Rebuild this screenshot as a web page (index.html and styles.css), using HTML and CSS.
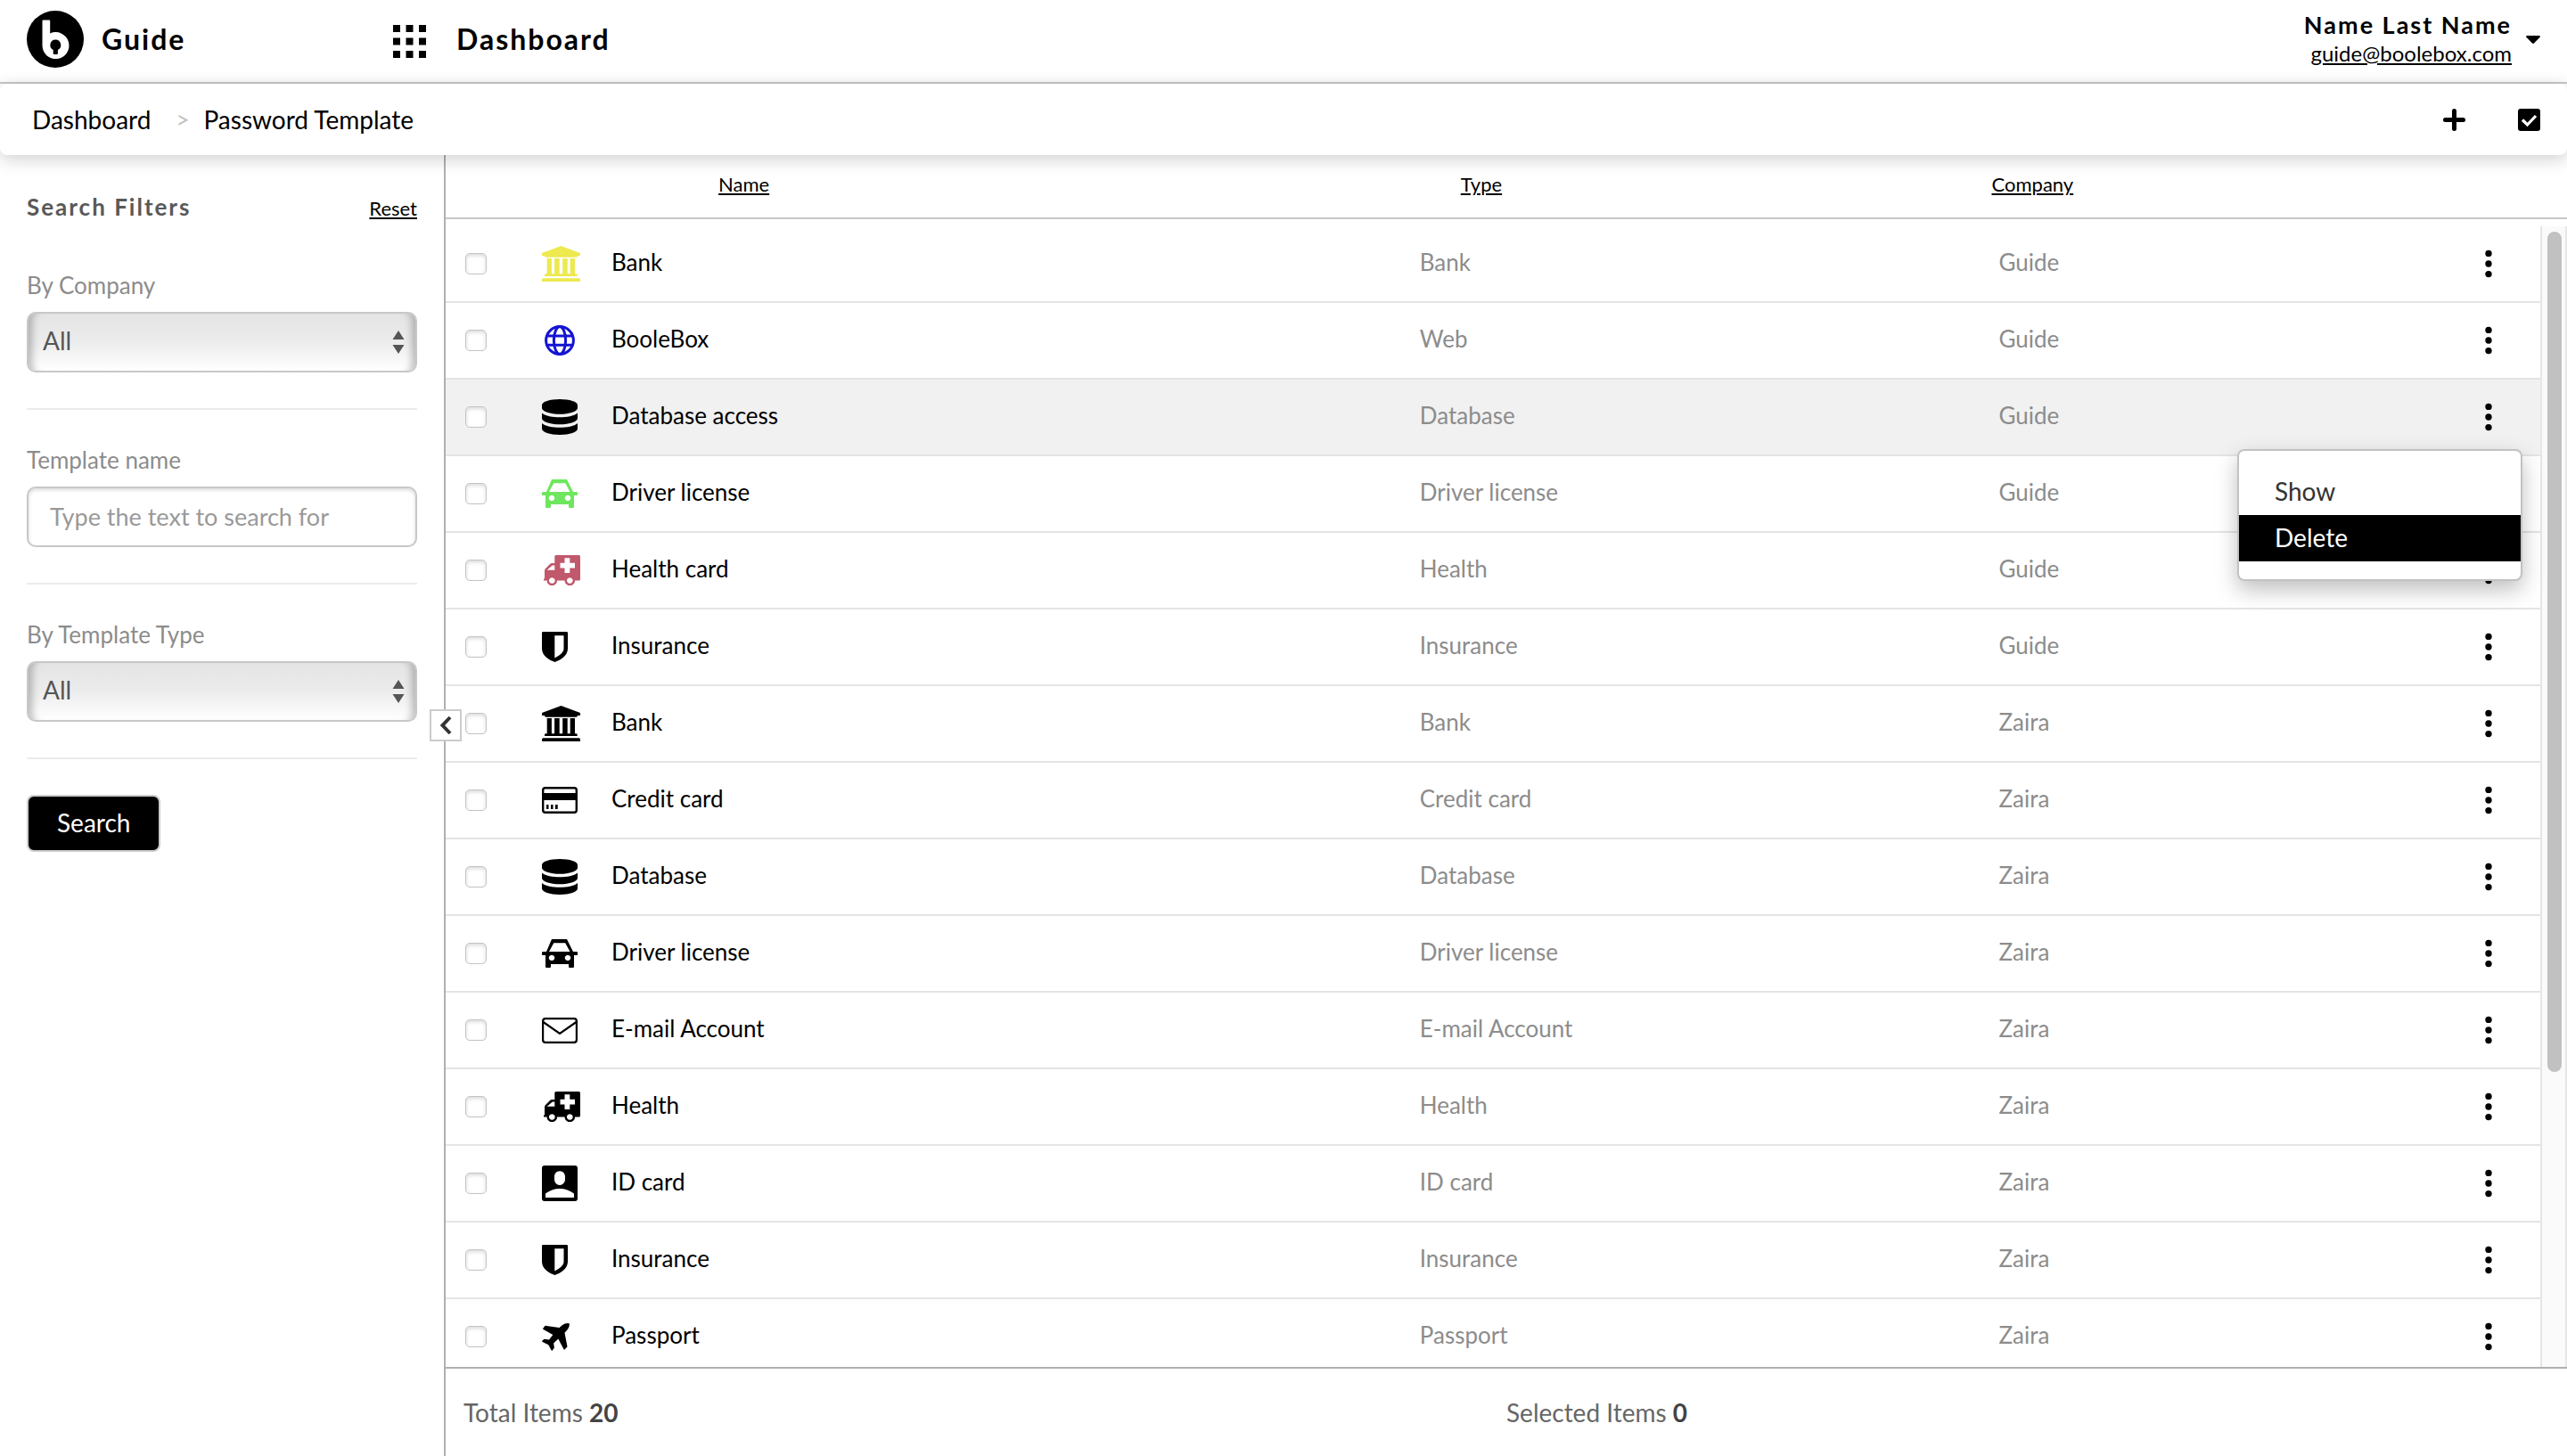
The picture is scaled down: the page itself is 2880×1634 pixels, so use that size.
FILE: index.html
```html
<!DOCTYPE html>
<html lang="en">
<head>
  <meta charset="UTF-8" />
  <meta name="viewport" content="width=device-width, initial-scale=1.0">
  <title>Password Template</title>
  <link rel="stylesheet" href="styles.css">
</head>
<body>
<svg class="sprite" aria-hidden="true">
  <symbol id="bank" viewBox="0 0 43 40">
    <path d="M21.500 0 43 8v3h-3q0 1.700-1.700 1.700H4.700Q3 12.700 3 11H0V8z"/>
    <path d="M5.700 14h5.200v17.300h3.200V14h5.600v17.300h3.500V14h5.500v17.300h3V14H37v17.300h1.300q1.400 0 1.400 1.400V34H3v-1.300q0-1.400 1.400-1.400h1.300zM1.500 36.300h40q1.500 0 1.500 1.500V40H0v-2.200q0-1.500 1.500-1.500z"/>
  </symbol>
  <symbol id="globe" viewBox="0 0 34 34">
    <g fill="none" stroke="currentColor" stroke-width="3">
      <circle cx="17" cy="17" r="15.400"/>
      <ellipse cx="17" cy="17" rx="6.600" ry="15.400"/>
      <path d="M2.500 12h29M2.500 22.200h29"/>
    </g>
  </symbol>
  <symbol id="database" viewBox="0 0 40 40">
    <path d="M0 6.500C0 2.900 9 0 20 0s20 2.900 20 6.500V10c0 3.700-9 6.800-20 6.800S0 13.700 0 10z"/>
    <path d="M0 15.500c4 3.400 12 4.800 20 4.800s16-1.400 20-4.800v6c0 3.700-9 6.800-20 6.800s-20-3.100-20-6.800z"/>
    <path d="M0 27c4 3.400 12 4.800 20 4.800s16-1.400 20-4.800v6.300C40 37 31 40 20 40S0 37 0 33.300z"/>
  </symbol>
  <symbol id="car" viewBox="0 0 40 32">
    <path fill-rule="evenodd" d="M11 0h17l7 14h3.500a1.700 1.700 0 0 1 0 4H36v12a3 3 0 0 1-6 0v-2H10v2a3 3 0 0 1-6 0V18H1.500a1.700 1.700 0 0 1 0-4H5zM13.300 4.200 8 14h23.500l-5.300-9.800zM11 17.700a3.200 3.200 0 1 0 .01 0zM29 17.700a3.200 3.200 0 1 0 .01 0z"/>
  </symbol>
  <symbol id="ambulance" viewBox="0 0 41 34">
    <path fill-rule="evenodd" d="M12.300 1.500Q12.300 0 13.800 0h25.700Q41 0 41 1.500V27q0 1.500-1.500 1.500h-4.400a5.800 5.800 0 0 1-11.600 0h-8.400a5.800 5.800 0 0 1-11.600 0H0v-2h1V17.500Q1 16 2 15l5-5q1-1 2.500-1h2.800zM12.300 11.600H9.800L3.700 16.700h8.600zM23.500 3.300v5.400h-5v5.800h5V20h5.800v-5.500H35V8.700h-5.700V3.300zM9.300 25.200a3.300 3.300 0 1 0 .01 0zM29.300 25.200a3.300 3.300 0 1 0 .01 0z"/>
  </symbol>
  <symbol id="shield" viewBox="0 0 29 34">
    <path fill-rule="evenodd" d="M1.200 0h26.600Q29 0 29 1.200V19c0 8-8.500 13-14.500 15C8.500 32 0 27 0 19V1.200Q0 0 1.200 0zM14.300 4.300V29.500c5.500-3 10.200-6.500 10.200-10.500V4.300z"/>
  </symbol>
  <symbol id="card" viewBox="0 0 40 30">
    <rect x="1.200" y="1.200" width="37.600" height="27.600" rx="2.500" fill="none" stroke="currentColor" stroke-width="2.400"/>
    <path d="M1 7h38v8H1zM5 20h2.500v5H5zM10 20h2.500v5H10zM15 20h2.700v5H15z"/>
  </symbol>
  <symbol id="mail" viewBox="0 0 40 29">
    <g fill="none" stroke="currentColor" stroke-width="2.200">
      <rect x="1.100" y="1.100" width="37.800" height="26.800" rx="2.800"/>
      <path d="M1.500 5 20 17.800 38.500 5"/>
    </g>
  </symbol>
  <symbol id="idcard" viewBox="0 0 40 40">
    <path fill-rule="evenodd" d="M3 0h34q3 0 3 3v34q0 3-3 3H3q-3 0-3-3V3q0-3 3-3zM4 36h32v-4.500C31.500 28 26 26 20 26S8.500 28 4 31.500zM20 6.200c-3.500 0-6 2.800-6 6.300v3c0 3.500 2.500 6.500 6 6.500s6-3 6-6.500v-3c0-3.500-2.500-6.300-6-6.300z"/>
  </symbol>
  <symbol id="plane" viewBox="0 0 31 31">
    <path d="M30.700.3q.7 3.500-1.700 6.400l-3.500 4 3 15.500-3 3.300q-.6.400-1-.2L18.300 17.500l-5.200 5 .8 5-2.300 3.300q-.6.200-.9-.2L7.300 24.200.3 20.800q-.4-.6 0-1l2.200-2 5.500.6 4.300-5.400L1.300 6.800q-.5-.5 0-1L3.600 2.800 19.500 5l3.500-3Q26.500-.5 30.700.3z"/>
  </symbol>
  <symbol id="dots" viewBox="0 0 8 32">
    <circle cx="4" cy="4.400" r="3.700"/><circle cx="4" cy="16" r="3.700"/><circle cx="4" cy="27.600" r="3.700"/>
  </symbol>
  <symbol id="sort" viewBox="0 0 14 26">
    <path d="M7 0l6.500 10H.500zM7 26L.500 16h13z"/>
  </symbol>
</svg>

<header class="topbar">
  <a class="brand" href="#">
    <svg class="logo" viewBox="0 0 64 64" aria-hidden="true">
      <circle cx="32" cy="32" r="32"/>
      <path fill="#fff" d="M17.500 11.500q0-1 1-1h6.700q1 0 1 1v14A15 15 0 1 1 17.500 39z"/>
      <path d="M32.300 32.500a6 6 0 0 1 2.600 11.400V48q0 1-1 1h-3.200q-1 0-1-1v-4.100a6 6 0 0 1 2.600-11.400z"/>
    </svg>
    <span>Guide</span>
  </a>
  <button class="apps-btn" aria-label="Applications">
    <svg width="37" height="37" viewBox="0 0 37 37"><path d="M0 0h8v8H0zM14.500 0h8v8h-8zM29 0h8v8h-8zM0 14.500h8v8H0zM14.500 14.500h8v8h-8zM29 14.500h8v8h-8zM0 29h8v8H0zM14.500 29h8v8h-8zM29 29h8v8h-8z"/></svg>
  </button>
  <h1>Dashboard</h1>
  <div class="user">
    <div class="user-info">
      <div class="user-name">Name Last Name</div>
      <a class="user-mail" href="#">guide@boolebox.com</a>
    </div>
    <button aria-label="Account menu">
      <svg width="16" height="9" viewBox="0 0 16 9"><path d="M1 0h14q1.500.5.600 1.700L9 8.500q-1 .9-2 0L.400 1.700Q-.500.500 1 0z"/></svg>
    </button>
  </div>
</header>

<nav class="toolbar">
  <a href="#">Dashboard</a>
  <span class="sep">&gt;</span>
  <a href="#">Password Template</a>
  <div class="tools">
    <button aria-label="Add">
      <svg width="25" height="25" viewBox="0 0 25 25"><path d="M12.500 2.500v20M2.500 12.500h20" fill="none" stroke="#000" stroke-width="5" stroke-linecap="round"/></svg>
    </button>
    <button aria-label="Select all">
      <svg width="25" height="25" viewBox="0 0 25 25"><rect width="25" height="25" rx="3"/><path d="M5 12.500l5.500 5.500L20 8" fill="none" stroke="#fff" stroke-width="3.200"/></svg>
    </button>
  </div>
</nav>

<div class="workspace">
  <aside class="sidebar">
    <div class="filters-head">
      <h2>Search Filters</h2>
      <a href="#">Reset</a>
    </div>
    <div class="filter">
      <label for="company">By Company</label>
      <div class="select-box">
        <select id="company"><option>All</option></select>
        <svg width="14" height="26"><use href="#sort"/></svg>
      </div>
    </div>
    <div class="filter">
      <label for="template">Template name</label>
      <input type="text" id="template" placeholder="Type the text to search for">
    </div>
    <div class="filter">
      <label for="type">By Template Type</label>
      <div class="select-box">
        <select id="type"><option>All</option></select>
        <svg width="14" height="26"><use href="#sort"/></svg>
      </div>
    </div>
    <button class="search-btn">Search</button>
    <button class="collapse-btn" aria-label="Collapse filters">
      <svg width="14" height="22" viewBox="0 0 14 22"><path d="M12 2L3.500 11l8.500 9" fill="none" stroke="#333" stroke-width="4"/></svg>
    </button>
  </aside>

  <main>
    <div class="list">
      <table>
        <colgroup>
          <col class="col-check"><col class="col-icon"><col class="col-name"><col class="col-type"><col><col class="col-menu">
        </colgroup>
        <thead>
          <tr>
            <th></th>
            <th></th>
            <th class="th-name"><a href="#">Name</a></th>
            <th class="th-type"><a href="#">Type</a></th>
            <th><a href="#">Company</a></th>
            <th></th>
          </tr>
        </thead>
        <tbody id="rows"></tbody>
      </table>
      <div class="scrollbar"><div class="thumb"></div></div>
    </div>
    <footer>
      <div>Total Items <b>20</b></div>
      <div>Selected Items <b>0</b></div>
    </footer>
  </main>
</div>

<script>
const items = [
  { name: "Bank", type: "Bank", company: "Guide", icon: "bank", color: "yellow" },
  { name: "BooleBox", type: "Web", company: "Guide", icon: "globe", color: "blue" },
  { name: "Database access", type: "Database", company: "Guide", icon: "database", open: true },
  { name: "Driver license", type: "Driver license", company: "Guide", icon: "car", color: "green" },
  { name: "Health card", type: "Health", company: "Guide", icon: "ambulance", color: "red" },
  { name: "Insurance", type: "Insurance", company: "Guide", icon: "shield" },
  { name: "Bank", type: "Bank", company: "Zaira", icon: "bank" },
  { name: "Credit card", type: "Credit card", company: "Zaira", icon: "card" },
  { name: "Database", type: "Database", company: "Zaira", icon: "database" },
  { name: "Driver license", type: "Driver license", company: "Zaira", icon: "car" },
  { name: "E-mail Account", type: "E-mail Account", company: "Zaira", icon: "mail" },
  { name: "Health", type: "Health", company: "Zaira", icon: "ambulance" },
  { name: "ID card", type: "ID card", company: "Zaira", icon: "idcard" },
  { name: "Insurance", type: "Insurance", company: "Zaira", icon: "shield" },
  { name: "Passport", type: "Passport", company: "Zaira", icon: "plane" }
];
const menu = `
  <div class="menu">
    <button>Show</button>
    <button class="active">Delete</button>
  </div>`;

document.getElementById("rows").innerHTML = items.map(item => `
  <tr class="${item.open ? "selected" : ""}">
    <td class="check"><input type="checkbox" aria-label="Select ${item.name}"></td>
    <td class="icon"><svg class="icon-${item.icon} ${item.color || ""}"><use href="#${item.icon}"/></svg></td>
    <td class="name">${item.name}</td>
    <td class="text">${item.type}</td>
    <td class="text">${item.company}</td>
    <td class="actions">
      <button class="dots-btn" aria-label="Actions"><svg width="8" height="32"><use href="#dots"/></svg></button>
      ${item.open ? menu : ""}
    </td>
  </tr>`).join("");
</script>
</body>
</html>
```
FILE: styles.css
```css
* {
  box-sizing: border-box;
}
body {
  margin: 0;
  height: 100vh;
  display: flex;
  flex-direction: column;
  overflow: hidden;
  font-family: Lato, sans-serif;
  font-size: 26px;
  line-height: 32px;
  color: #000;
  background: #fff;
}
a {
  color: #000;
}
button {
  font: inherit;
  padding: 0;
  border: none;
  background: none;
  cursor: pointer;
}
button svg {
  display: block;
}
h1, h2 {
  margin: 0;
}
.sprite {
  display: none;
}

/* top bar */
.topbar {
  display: flex;
  align-items: center;
  height: 94px;
  padding: 0 30px 4px;
  border-bottom: 2px solid #c8c8c8;
}
.brand {
  display: flex;
  align-items: center;
  gap: 20px;
  width: 411px;
  font-size: 32px;
  font-weight: bold;
  letter-spacing: 2px;
  text-decoration: none;
}
.logo {
  width: 64px;
  height: 64px;
}
.apps-btn {
  margin: 4px 34px 0 0;
}
h1 {
  font-size: 32px;
  letter-spacing: 2px;
}
.user {
  display: flex;
  align-items: center;
  gap: 16px;
  margin-left: auto;
  text-align: right;
}
.user-name {
  font-size: 27px;
  font-weight: bold;
  letter-spacing: 2px;
}
.user-mail {
  display: block;
  font-size: 24px;
}

/* breadcrumb bar */
.toolbar {
  position: relative;
  z-index: 2;
  display: flex;
  align-items: center;
  height: 80px;
  padding: 0 30px 0 36px;
  font-size: 28px;
  background: #fff;
  border-radius: 8px;
  box-shadow: 0 4px 20px rgba(0,0,0,0.2);
}
.toolbar a {
  text-decoration: none;
}
.sep {
  padding: 0 16px 0 28px;
  font-size: 26px;
  color: #c0c0c0;
}
.tools {
  display: flex;
  gap: 59px;
  margin-left: auto;
}

.workspace {
  display: flex;
  flex: 1;
  min-height: 0;
}

/* filters */
.sidebar {
  position: relative;
  width: 500px;
  flex-shrink: 0;
  padding: 42px 30px 0;
  border-right: 2px solid #b0b0b0;
}
.filters-head {
  display: flex;
  justify-content: space-between;
  align-items: baseline;
  margin-bottom: 14px;
}
.filters-head h2 {
  font-size: 26px;
  letter-spacing: 2px;
  color: #595959;
}
.filters-head a {
  font-size: 22px;
}
.filter {
  padding: 40px 0;
  border-bottom: 2px solid #ebebeb;
}
.filter label {
  display: block;
  margin-bottom: 14px;
  color: #8c8c8c;
}
.filter select, .filter input {
  display: block;
  width: 100%;
  height: 68px;
  border: 2px solid #c8c8c8;
  border-radius: 10px;
  font: inherit;
  font-size: 28px;
}
.filter select {
  appearance: none;
  padding: 0 40px 4px 16px;
  color: #555;
  background: linear-gradient(#e4e4e4, #ececec 50%, #fff);
  box-shadow: inset 12px 0 8px -8px rgba(0,0,0,0.25), inset -12px 0 8px -8px rgba(0,0,0,0.25);
}
.filter input {
  padding: 0 24px 2px;
  font-size: 27px;
  box-shadow: inset 0 2px 4px rgba(0,0,0,0.15);
}
.filter input::placeholder {
  color: #999;
}
.select-box {
  position: relative;
}
.select-box svg {
  position: absolute;
  right: 14px;
  top: 21px;
  fill: #555;
  pointer-events: none;
}
.search-btn {
  height: 64px;
  margin-top: 40px;
  padding: 0 32px 2px;
  border: 2px solid #ccc;
  border-radius: 8px;
  font-size: 28px;
  color: #fff;
  background: #000;
}
.collapse-btn {
  position: absolute;
  z-index: 1;
  right: -20px;
  top: 622px;
  display: flex;
  justify-content: center;
  align-items: center;
  width: 36px;
  height: 36px;
  border: 2px solid #ccc;
  background: #fff;
}

/* list */
main {
  display: flex;
  flex-direction: column;
  flex: 1;
  min-width: 0;
}
.list {
  position: relative;
  flex: 1;
  min-height: 0;
  overflow: hidden;
}
table {
  width: 100%;
  table-layout: fixed;
  border-collapse: separate;
  border-spacing: 0;
}
.col-check {
  width: 108px;
}
.col-icon {
  width: 70px;
}
.col-name {
  width: 38.1%;
}
.col-type {
  width: 27.3%;
}
.col-menu {
  width: 126px;
}
th {
  height: 72px;
  padding: 0 0 4px;
  border-bottom: 2px solid #c8c8c8;
  font-size: 22px;
  font-weight: normal;
  text-align: left;
}
.th-name {
  padding-left: 128px;
}
.th-type {
  padding-left: 54px;
}
tbody::before {
  content: "";
  display: block;
  height: 8px;
}
td {
  height: 86px;
  padding: 0;
  border-bottom: 2px solid #e4e4e4;
}
td svg {
  display: block;
  fill: currentColor;
}
.selected td {
  background: #f1f1f1;
}
.check {
  padding-left: 22px;
}
.check input {
  appearance: none;
  display: block;
  width: 24px;
  height: 24px;
  margin: 0;
  border: 1px solid #c4c4c4;
  border-radius: 5px;
  background: #fff;
  box-shadow: inset 0 2px 4px rgba(0,0,0,0.15);
}
.name, .text {
  padding: 0 8px 4px;
}
.text {
  color: #8c8c8c;
}
.icon-bank {
  width: 43px;
  height: 40px;
}
.icon-globe {
  width: 34px;
  height: 34px;
  margin-left: 3px;
}
.icon-database, .icon-idcard {
  width: 40px;
  height: 40px;
}
.icon-car {
  width: 40px;
  height: 32px;
}
.icon-ambulance {
  width: 41px;
  height: 34px;
  margin-left: 2px;
}
.icon-shield {
  width: 29px;
  height: 34px;
}
.icon-card {
  width: 40px;
  height: 30px;
}
.icon-mail {
  width: 40px;
  height: 29px;
}
.icon-plane {
  width: 31px;
  height: 31px;
}
.yellow {
  color: #ede94f;
}
.blue {
  color: #1414d2;
}
.green {
  color: #6ee65e;
}
.red {
  color: #bf596b;
}
.actions {
  position: relative;
}
.dots-btn {
  display: block;
  padding: 0 34px;
}
.menu {
  position: absolute;
  z-index: 3;
  top: 78px;
  right: 50px;
  width: 320px;
  padding: 20px 0;
  border: 2px solid #c2c2c2;
  border-radius: 8px;
  background: #fff;
  box-shadow: 0 10px 24px rgba(0,0,0,0.25);
}
.menu button {
  display: block;
  width: 100%;
  height: 52px;
  padding: 0 0 2px 40px;
  font-size: 28px;
  text-align: left;
  color: #333;
}
.menu .active {
  color: #fff;
  background: #000;
}
.scrollbar {
  position: absolute;
  top: 80px;
  right: 0;
  bottom: 0;
  width: 30px;
  padding: 6px;
  border: solid #e6e6e6;
  border-width: 0 2px;
  background: #fafafa;
}
.thumb {
  width: 16px;
  height: 74.4%;
  border-radius: 8px;
  background: #c1c1c1;
}
footer {
  display: flex;
  align-items: center;
  height: 100px;
  padding: 0 20px;
  border-top: 2px solid #b0b0b0;
  font-size: 28px;
  color: #666;
}
footer div {
  width: 50%;
}
footer b {
  color: #444;
}
```
